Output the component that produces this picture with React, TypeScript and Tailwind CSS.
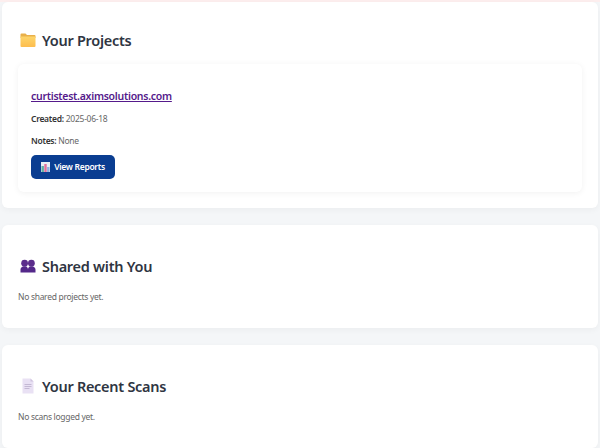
const font = "font-['Noto_Sans','Open_Sans',sans-serif]";

function FolderIcon() {
  return (
    <svg width="16" height="16" viewBox="0 0 16 16" className="ml-[2px] shrink-0">
      <defs>
        <linearGradient id="folder" x1="0" y1="0" x2="0" y2="1">
          <stop offset="0" stopColor="#fdd56a" />
          <stop offset="1" stopColor="#fdbd4e" />
        </linearGradient>
      </defs>
      <path d="M0.5 2.5a1 1 0 0 1 1-1h4l1.5 1.5h7.5a1 1 0 0 1 1 1v2h-15z" fill="#e9b04a" />
      <path d="M0.5 4.5h15v9.5a1 1 0 0 1-1 1h-13a1 1 0 0 1-1-1z" fill="url(#folder)" />
    </svg>
  );
}

function PeopleIcon() {
  return (
    <svg width="16" height="16" viewBox="0 0 16 16" className="ml-[2px] shrink-0">
      <circle cx="4.6" cy="5.2" r="3.4" fill="#5b2d8c" />
      <circle cx="11.4" cy="5.2" r="3.4" fill="#5b2d8c" />
      <path d="M0.5 14.5v-3c0-2 1.6-3.3 4.1-3.3s3.4 1.3 3.4 3.3c0-2 1-3.3 3.4-3.3s4.1 1.3 4.1 3.3v3z" fill="#54288a" />
    </svg>
  );
}

function DocIcon() {
  return (
    <svg width="16" height="16" viewBox="0 0 16 16" className="ml-[2px] shrink-0">
      <path d="M2.5 0.5h8l3 3v12h-11z" fill="#e9e1f4" />
      <path d="M10.5 0.5l3 3h-3z" fill="#cfc4de" />
      <path d="M4.5 6.5h7M4.5 8.5h7M4.5 10.5h5" stroke="#c4b9d4" strokeWidth="1" />
    </svg>
  );
}

function ChartIcon() {
  return (
    <svg width="9" height="10" viewBox="0 0 9 10" className="shrink-0">
      <rect x="0" y="0" width="9" height="10" fill="#e6eef5" />
      <rect x="0.5" y="4" width="2.4" height="6" fill="#5fb0a4" />
      <rect x="3.3" y="2" width="2.4" height="8" fill="#e0709c" />
      <rect x="6.1" y="5" width="2.4" height="5" fill="#8fb0e0" />
    </svg>
  );
}

function Panel({ icon, title, children, className }: { icon: React.ReactNode; title: string; children: React.ReactNode; className: string }) {
  return (
    <section className={`mx-[2px] rounded-[6px] bg-white px-4 shadow-[0_2px_6px_rgba(0,0,0,0.04)] ${className}`}>
      <h2 className="flex items-center gap-[6px] text-[14.5px] leading-[22px] font-semibold tracking-[-0.28px] text-[#2f3542]">
        {icon}
        {title}
      </h2>
      {children}
    </section>
  );
}

export default function App() {
  return (
    <div className={`${font} h-[448px] w-[600px] overflow-hidden bg-[#f4f6f8]`}>
      <div className="h-[2px] bg-[#fdeeee]" />

      <Panel icon={<FolderIcon />} title="Your Projects" className="h-[206px] pt-[27px]">
        <div className="mt-[13px] h-[128px] rounded-[6px] bg-white px-[13px] pt-[23px] shadow-[0_1px_6px_rgba(0,0,0,0.06)]">
          <a className="block text-[10.5px] leading-[18px] font-semibold tracking-[-0.27px] text-[#551a8b] underline">curtistest.aximsolutions.com</a>
          <p className="mt-[7px] text-[8.5px] leading-[14px] tracking-[-0.27px] text-[#666]">
            <b className="font-semibold text-[#333]">Created:</b> 2025-06-18
          </p>
          <p className="mt-[8px] text-[8.5px] leading-[14px] tracking-[-0.27px] text-[#666]">
            <b className="font-semibold text-[#333]">Notes:</b> None
          </p>
          <div className="mt-[7px] flex h-[24px] w-[84px] items-center justify-center gap-[4px] rounded-[5px] bg-[#0a3d91] text-[8.5px] font-semibold tracking-[-0.3px] text-white">
            <ChartIcon />
            View Reports
          </div>
        </div>
      </Panel>

      <Panel icon={<PeopleIcon />} title="Shared with You" className="mt-[17px] h-[103px] pt-[30px]">
        <p className="mt-[13px] text-[8.5px] leading-[14px] tracking-[-0.3px] text-[#666]">No shared projects yet.</p>
      </Panel>

      <Panel icon={<DocIcon />} title="Your Recent Scans" className="mt-[17px] h-[103px] pt-[30px]">
        <p className="mt-[13px] text-[8.5px] leading-[14px] tracking-[-0.3px] text-[#666]">No scans logged yet.</p>
      </Panel>
    </div>
  );
}
